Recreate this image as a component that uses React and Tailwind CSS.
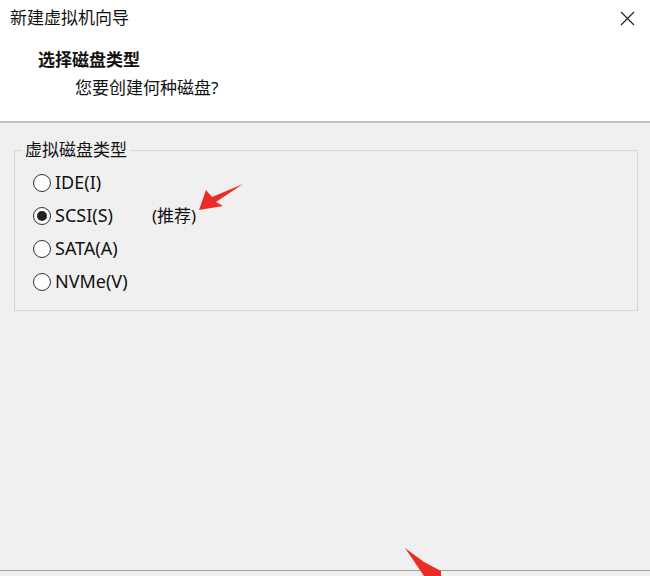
import React, { useState } from 'react';

const font = { fontFamily: '"Noto Sans", "Noto Sans CJK SC", sans-serif' };

const options = [
  { id: 'ide', label: 'IDE(I)' },
  { id: 'scsi', label: 'SCSI(S)', note: '(推荐)' },
  { id: 'sata', label: 'SATA(A)' },
  { id: 'nvme', label: 'NVMe(V)' },
];

function Radio({ checked }) {
  return (
    <span className="w-[18px] h-[18px] rounded-full border border-[#333] bg-white flex items-center justify-center shrink-0">
      {checked && <span className="w-[10px] h-[10px] rounded-full bg-[#222]" />}
    </span>
  );
}

function Arrows() {
  return (
    <svg className="absolute inset-0 pointer-events-none" width="650" height="576" viewBox="0 0 650 576">
      <polygon points="199,210 206,190 212,197 243,184 216,202 223,206" fill="#ec2d27" />
      <polygon points="405,548 424,562 441,571 441,576 424,576" fill="#ec2d27" />
    </svg>
  );
}

export default function App() {
  const [disk, setDisk] = useState('scsi');

  return (
    <div className="relative w-[650px] h-[576px] overflow-hidden bg-[#f0f0f0] text-[#111]" style={font}>
      <div className="h-[123px] bg-white border-b-2 border-[#c2c2c2]">
        <div className="flex items-center justify-between pl-[10px] pr-[15px] h-[36px]">
          <span className="text-[17px] leading-[36px]">新建虚拟机向导</span>
          <svg width="15" height="15" viewBox="0 0 15 15">
            <path d="M1 1 L14 14 M14 1 L1 14" stroke="#222" strokeWidth="1.2" />
          </svg>
        </div>
        <div className="mt-[10px] pl-[38px] text-[17px] leading-[28px] font-bold">选择磁盘类型</div>
        <div className="pl-[75px] text-[17px] leading-[28px]">您要创建何种磁盘?</div>
      </div>

      <div className="h-[453px] flex flex-col">
        <fieldset className="mt-[15px] ml-[14px] mr-[12px] border border-[#d6d6d6] pt-[4px] pb-[12px]">
          <legend className="ml-[7px] px-[3px] text-[17px] leading-[24px]">虚拟磁盘类型</legend>
          {options.map((o) => (
            <label key={o.id} className="flex items-center h-[33px] pl-[18px] cursor-pointer" onClick={() => setDisk(o.id)}>
              <Radio checked={disk === o.id} />
              <span className={`ml-[4px] text-[18px] ${o.note ? 'inline-block w-[97px]' : ''}`}>{o.label}</span>
              {o.note && <span className="text-[17px]">{o.note}</span>}
            </label>
          ))}
        </fieldset>
        <div className="flex-1" />
        <div className="border-t border-[#a0a0a0] h-[6px]" />
      </div>

      <Arrows />
    </div>
  );
}
